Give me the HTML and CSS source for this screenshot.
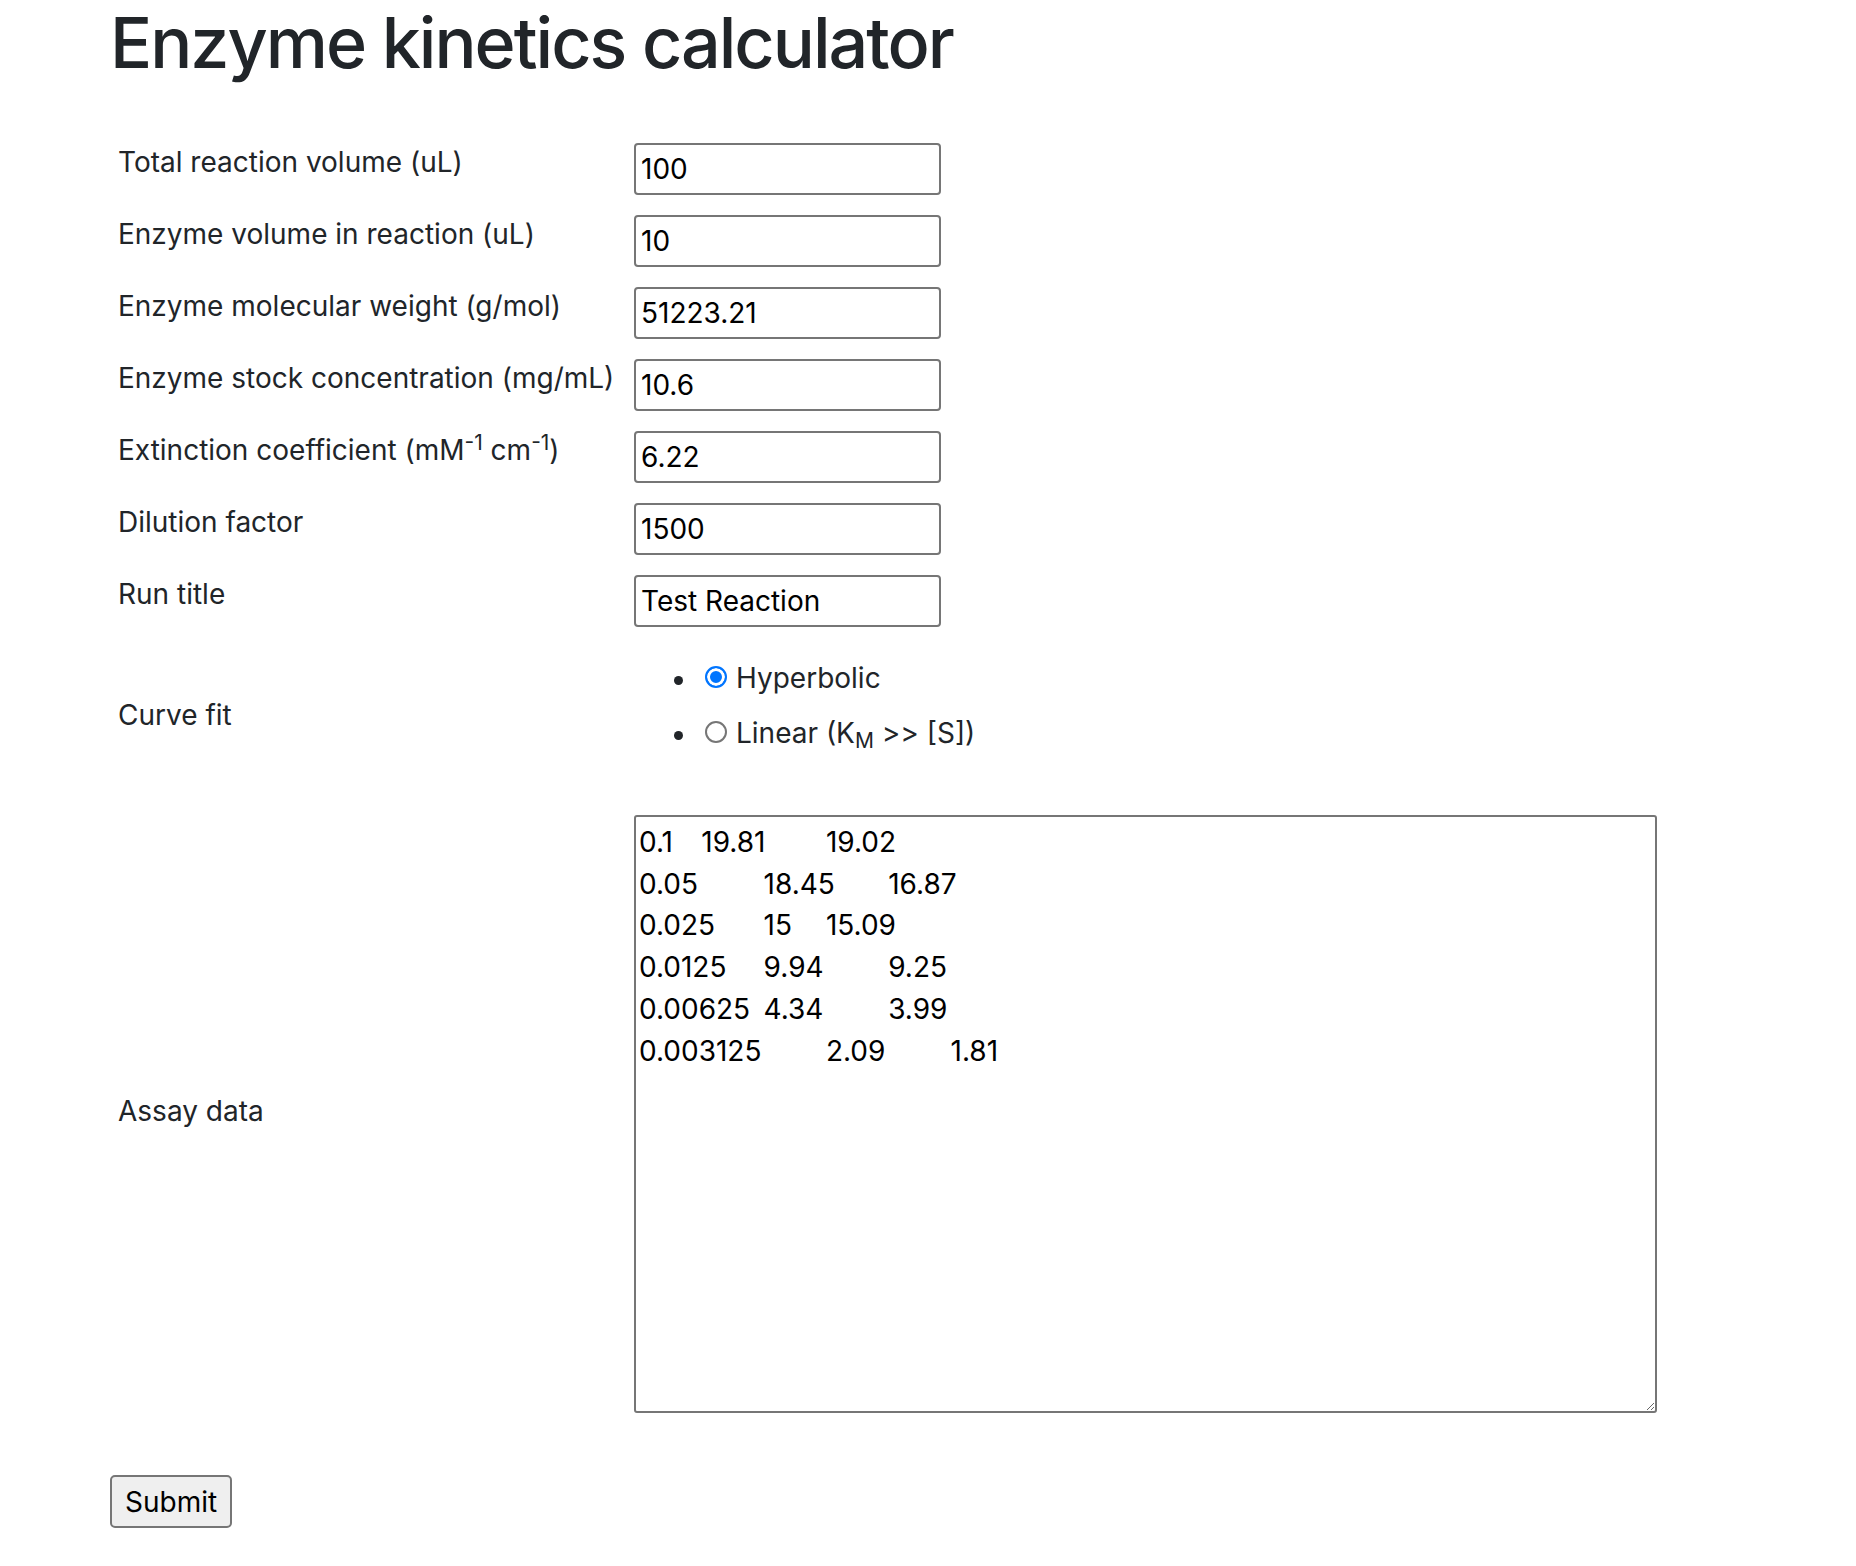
FILE: index.html
```html
<!DOCTYPE html>
<html lang="en">
<head>
<meta charset="utf-8">
<title>Enzyme kinetics calculator</title>
<link rel="stylesheet" href="styles.css">
</head>
<body>
<div class="page">
  <h1 class="title">Enzyme kinetics calculator</h1>
  <form class="form">
    <div class="grid">
      <label class="lbl">Total reaction volume (uL)</label>
      <input class="field" type="text" value="100">

      <label class="lbl">Enzyme volume in reaction (uL)</label>
      <input class="field" type="text" value="10">

      <label class="lbl">Enzyme molecular weight (g/mol)</label>
      <input class="field" type="text" value="51223.21">

      <label class="lbl">Enzyme stock concentration (mg/mL)</label>
      <input class="field" type="text" value="10.6">

      <label class="lbl">Extinction coefficient (mM<sup class="sup">-1</sup> cm<sup class="sup">-1</sup>)</label>
      <input class="field" type="text" value="6.22">

      <label class="lbl">Dilution factor</label>
      <input class="field" type="text" value="1500">

      <label class="lbl">Run title</label>
      <input class="field" type="text" value="Test Reaction">

      <label class="lbl lbl-mid lbl-curve">Curve fit</label>
      <ul class="choices">
        <li class="choice"><input class="radio" type="radio" name="fit" checked><span>Hyperbolic</span></li>
        <li class="choice"><input class="radio" type="radio" name="fit"><span>Linear (K<sub class="sub">M</sub> &gt;&gt; [S])</span></li>
      </ul>

      <label class="lbl lbl-mid lbl-assay">Assay data</label>
      <textarea class="data">0.1&#9;19.81&#9;19.02
0.05&#9;18.45&#9;16.87
0.025&#9;15&#9;15.09
0.0125&#9;9.94&#9;9.25
0.00625&#9;4.34&#9;3.99
0.003125&#9;2.09&#9;1.81</textarea>
    </div>
    <button class="submit" type="button">Submit</button>
  </form>
</div>
</body>
</html>
```

FILE: styles.css
```css
html, body {
  margin: 0;
  padding: 0;
  background: #ffffff;
}

body {
  color: #212529;
  font-family: Inter, "Liberation Sans", sans-serif;
  font-size: 28px;
  line-height: 42px;
}

.page {
  padding: 0 0 40px 110px;
}

.title {
  margin: 0;
  font-size: 70px;
  font-weight: 500;
  line-height: 86px;
  letter-spacing: -2px;
  color: #212529;
}

.form {
  margin: 57px 0 0 0;
}

.grid {
  display: grid;
  grid-template-columns: 516px 1023px;
  row-gap: 20px;
  margin-left: 8px;
}

.lbl {
  display: block;
  align-self: start;
  margin-top: -2px;
  white-space: nowrap;
}

.lbl-mid {
  align-self: center;
  margin-top: 0;
}

.lbl-curve {
  margin-bottom: 13px;
}

.lbl-assay {
  margin-bottom: 6px;
}

.sup {
  position: relative;
  top: -0.5em;
  font-size: 75%;
  line-height: 0;
  vertical-align: baseline;
}

.sub {
  position: relative;
  bottom: -0.25em;
  font-size: 75%;
  line-height: 0;
  vertical-align: baseline;
}

.field {
  box-sizing: border-box;
  width: 307px;
  height: 52px;
  margin: 0;
  padding: 0 5px;
  border: 2px solid #767676;
  border-radius: 4px;
  background: #fff;
  color: #000;
  font-family: Inter, "Liberation Sans", sans-serif;
  font-size: 28px;
  outline: none;
}

.choices {
  list-style: none;
  margin: 0;
  padding: 10px 0 28px 40px;
}

.choice {
  height: 55px;
  line-height: 42px;
  white-space: nowrap;
}

.choice::before {
  content: "";
  display: inline-block;
  width: 9px;
  height: 9px;
  border-radius: 50%;
  background: #212529;
  vertical-align: middle;
  margin-right: 22px;
}

.radio {
  appearance: none;
  -webkit-appearance: none;
  box-sizing: border-box;
  display: inline-block;
  width: 22px;
  height: 22px;
  margin: 0 9px 0 0;
  padding: 0;
  border: 2px solid #767676;
  border-radius: 50%;
  background: #fff;
  vertical-align: baseline;
}

.radio:checked {
  border-color: #0075ff;
  background: #0075ff;
  box-shadow: inset 0 0 0 3px #fff;
}

.data {
  box-sizing: border-box;
  display: block;
  width: 1023px;
  height: 598px;
  margin: 0;
  padding: 5px 3px;
  border: 2px solid #767676;
  border-radius: 3px;
  background: #fff;
  color: #000;
  font-family: Inter, "Liberation Sans", sans-serif;
  font-size: 28px;
  line-height: 41.7px;
  tab-size: 62.3px;
  -moz-tab-size: 62.3px;
  outline: none;
}

.submit {
  display: block;
  box-sizing: border-box;
  height: 53px;
  margin: 62px 0 0 0;
  padding: 0 13px;
  border: 2px solid #767676;
  border-radius: 5px;
  background: #efefef;
  color: #000;
  font-family: Inter, "Liberation Sans", sans-serif;
  font-size: 28px;
  line-height: 42px;
}
```
